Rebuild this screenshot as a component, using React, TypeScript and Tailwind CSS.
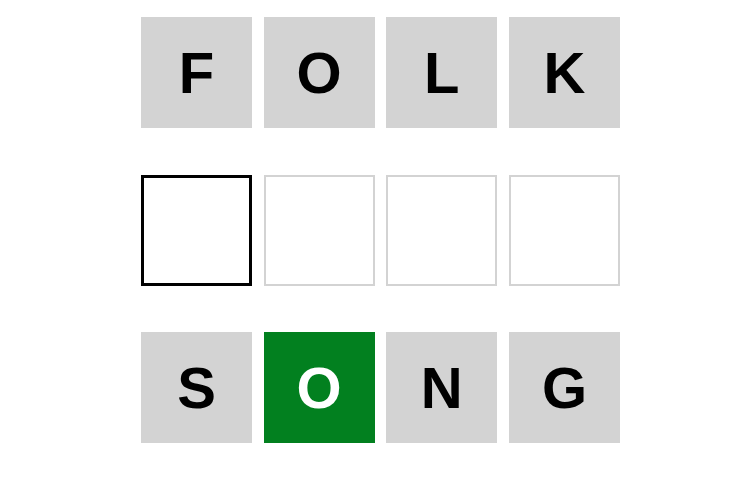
import React from "react";

type Tile = { ch: string; kind: "gray" | "green" | "empty" | "active" };

const rows: Tile[][] = [
  [
    { ch: "F", kind: "gray" },
    { ch: "O", kind: "gray" },
    { ch: "L", kind: "gray" },
    { ch: "K", kind: "gray" },
  ],
  [
    { ch: "", kind: "active" },
    { ch: "", kind: "empty" },
    { ch: "", kind: "empty" },
    { ch: "", kind: "empty" },
  ],
  [
    { ch: "S", kind: "gray" },
    { ch: "O", kind: "green" },
    { ch: "N", kind: "gray" },
    { ch: "G", kind: "gray" },
  ],
];

function TileBox({ t }: { t: Tile }) {
  const base =
    "w-[111px] h-[111px] flex items-center justify-center text-[58px] font-bold leading-none";
  if (t.kind === "gray")
    return <div className={`${base} bg-[#d3d3d3] text-black`}>{t.ch}</div>;
  if (t.kind === "green")
    return <div className={`${base} bg-[#02801f] text-white`}>{t.ch}</div>;
  if (t.kind === "active")
    return <div className={`${base} bg-white border-[3px] border-black`}>{t.ch}</div>;
  return <div className={`${base} bg-white border-[2px] border-[#d3d3d3]`}>{t.ch}</div>;
}

export default function App() {
  return (
    <div
      className="w-[750px] h-[484px] bg-white pt-[17px] pl-[141px] flex flex-col gap-[46.5px]"
      style={{ fontFamily: '"Liberation Sans", Arial, sans-serif' }}
    >
      {rows.map((r, i) => (
        <div key={i} className="flex gap-[11.67px]">
          {r.map((t, j) => (
            <TileBox key={j} t={t} />
          ))}
        </div>
      ))}
    </div>
  );
}
